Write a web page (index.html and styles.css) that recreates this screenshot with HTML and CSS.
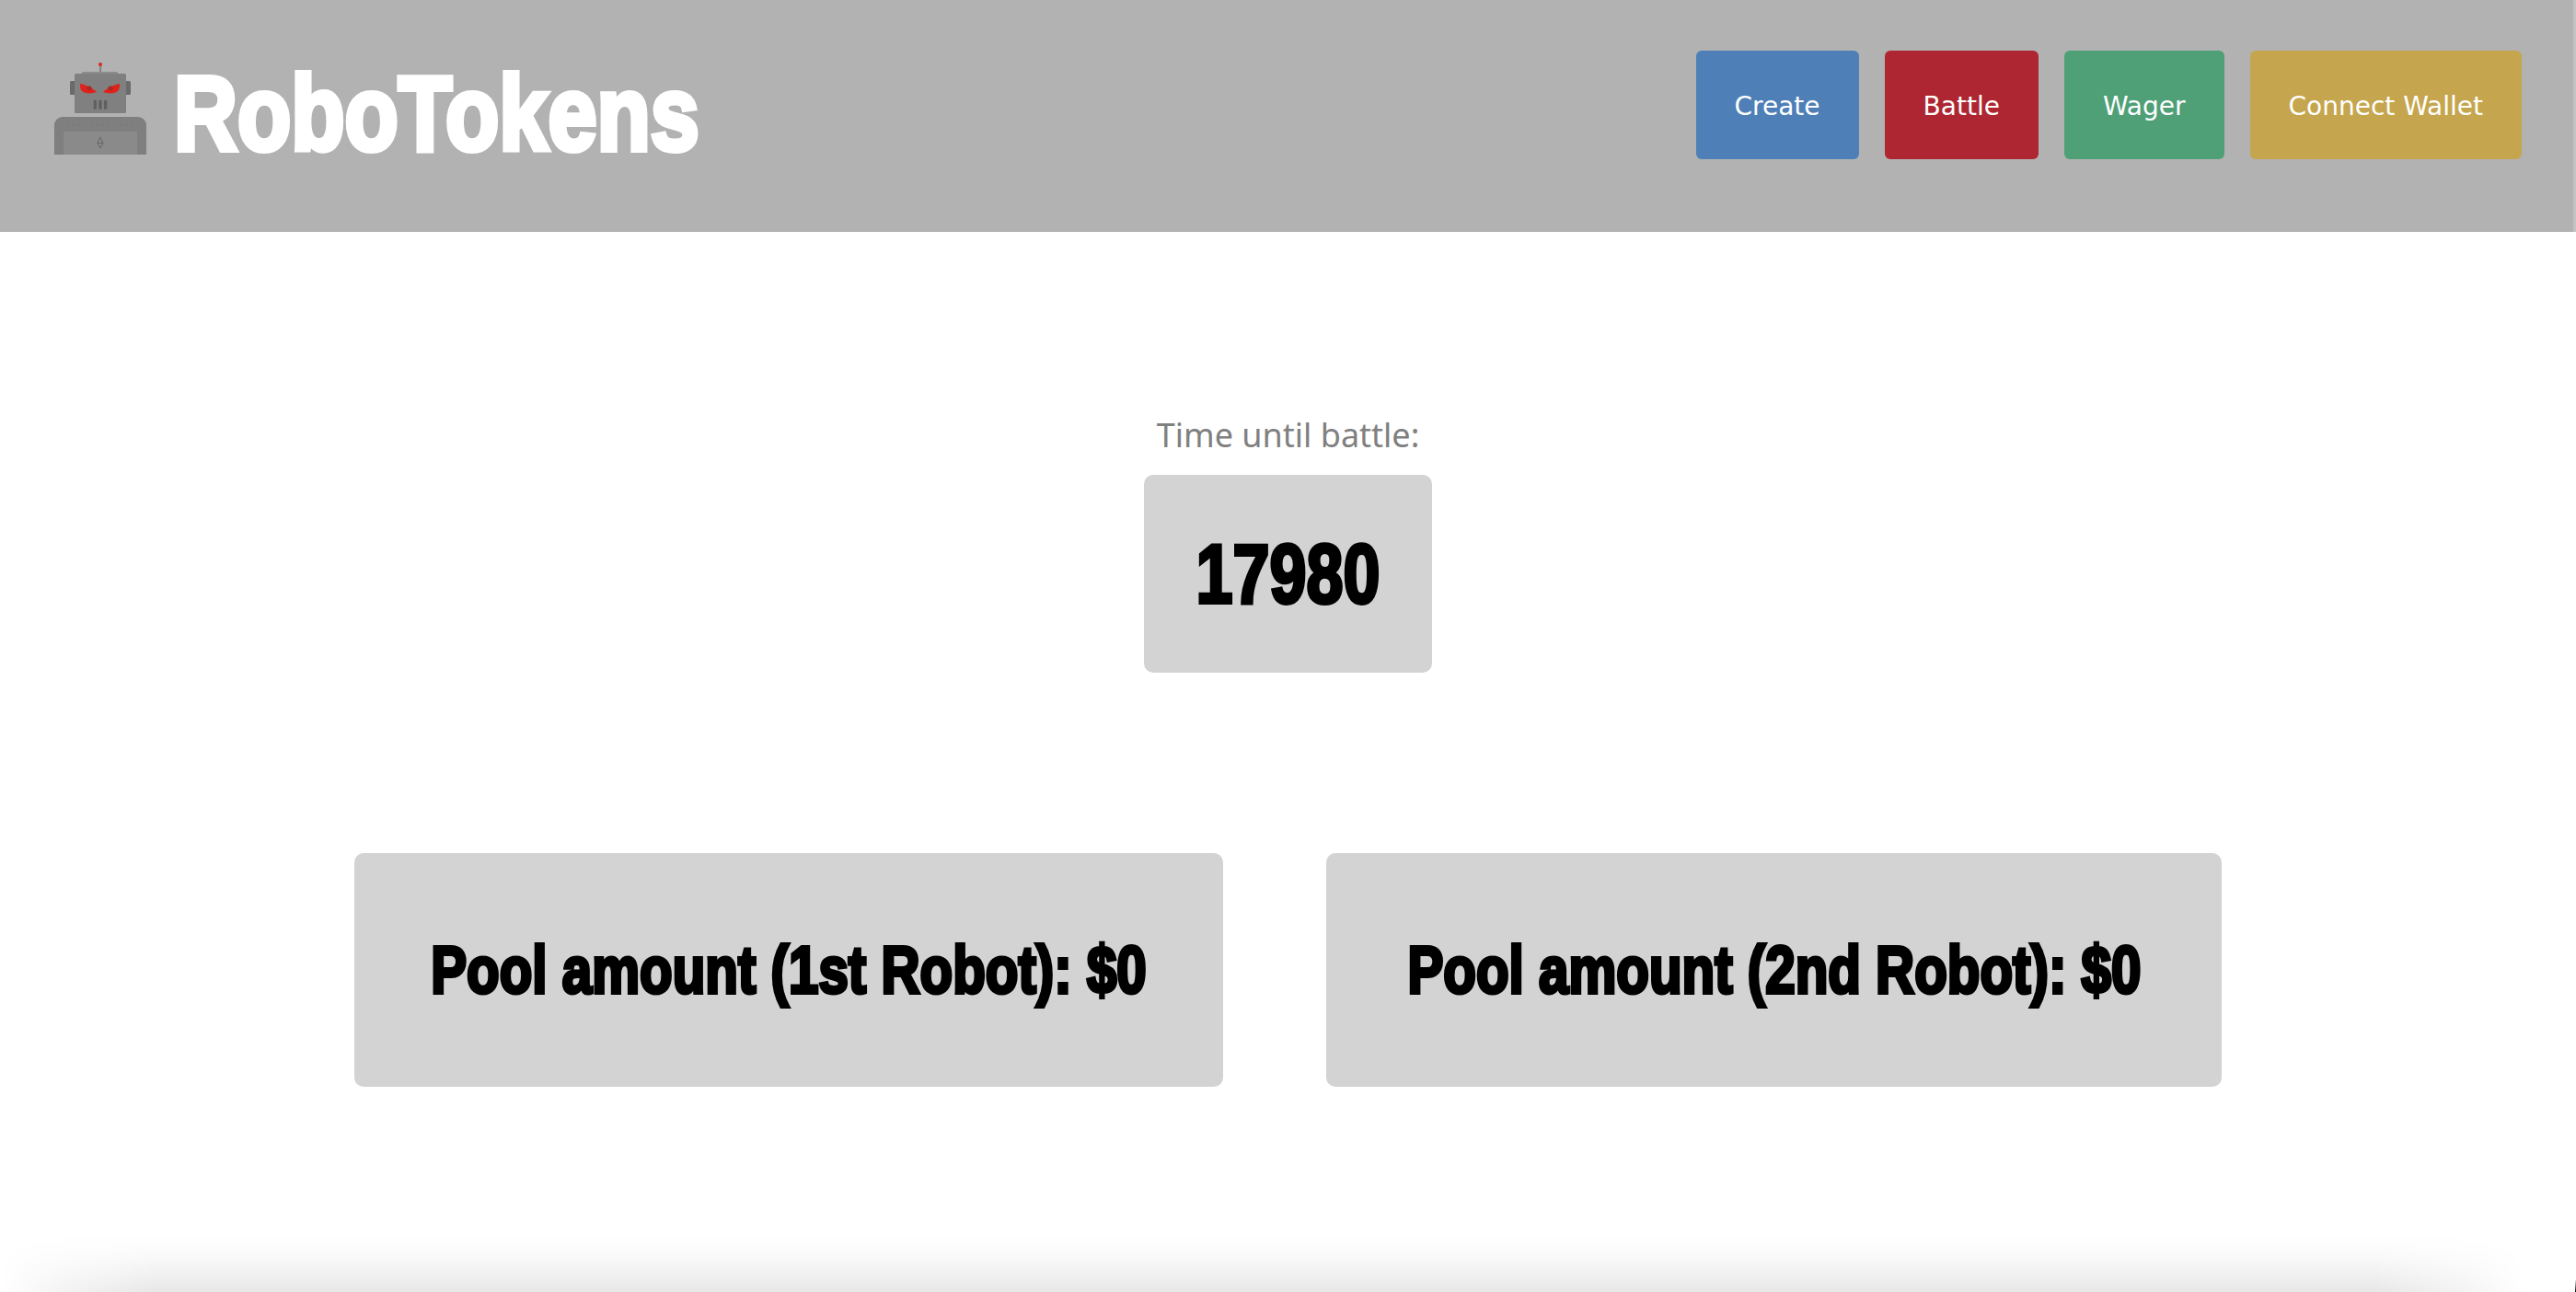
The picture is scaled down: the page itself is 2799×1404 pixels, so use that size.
FILE: index.html
```html
<!DOCTYPE html>
<html lang="en">
<head>
<meta charset="utf-8">
<title>RoboTokens</title>
<link rel="stylesheet" href="styles.css">
</head>
<body>
<header class="topbar">
  <div class="brand">
    <svg class="logo" viewBox="59 68 100 100" aria-hidden="true">
      <rect x="108.4" y="72" width="1.4" height="7" fill="#6f6f6f"/>
      <circle cx="109" cy="70" r="2" fill="#d8261f"/>
      <rect x="89" y="78" width="39" height="3" rx="1" fill="#8c8c8c"/>
      <rect x="76" y="88" width="6" height="15" rx="1.5" fill="#6a6a6a"/>
      <rect x="136" y="88" width="6" height="15" rx="1.5" fill="#6a6a6a"/>
      <rect x="81" y="80" width="56" height="43" rx="1.5" fill="#808080"/>
      <path d="M87 91 C93 92 100 95 105 100 C100 102 92 102 89 99 C87 97 87 94 87 91Z" fill="#e0221b"/>
      <path d="M130 91 C124 92 117 95 112 100 C117 102 125 102 128 99 C130 97 130 94 130 91Z" fill="#e0221b"/>
      <circle cx="97" cy="96" r="2.6" fill="#a82a24"/>
      <circle cx="120" cy="96" r="2.6" fill="#a82a24"/>
      <rect x="101.7" y="108.7" width="3.3" height="10" rx="1" fill="#5f5f5f"/>
      <rect x="107.3" y="108.7" width="3.3" height="10" rx="1" fill="#5f5f5f"/>
      <rect x="113" y="108.7" width="3.3" height="10" rx="1" fill="#5f5f5f"/>
      <path d="M59 168 V136 A9 9 0 0 1 68 127 H150 A9 9 0 0 1 159 136 V168Z" fill="#7f7f7f"/>
      <rect x="69" y="143" width="80" height="25" fill="#8a8a8a"/>
      <path d="M73 136 H145" stroke="#6c6c6c" stroke-width="1" stroke-dasharray="1 5.4"/>
      <path d="M109 149 L112 155.500 L109 161 L106 155.500Z M106 155.500 H112" fill="none" stroke="#666" stroke-width="1"/>
    </svg>
    <span class="wordmark">RoboTokens</span>
  </div>
  <nav class="actions">
    <button class="action action-create">Create</button>
    <button class="action action-battle">Battle</button>
    <button class="action action-wager">Wager</button>
    <button class="action action-wallet">Connect Wallet</button>
  </nav>
</header>
<main class="content">
  <p class="timer-label">Time until battle:</p>
  <div class="panel timer"><span class="timer-value">17980</span></div>
  <div class="pools">
    <div class="panel pool pool-first"><span class="pool-value">Pool amount (1st Robot): $0</span></div>
    <div class="panel pool pool-second"><span class="pool-value">Pool amount (2nd Robot): $0</span></div>
  </div>
</main>
<footer class="page-edge"></footer>
</body>
</html>
```
FILE: styles.css
```css
* { box-sizing: border-box; }
html, body { height: 100%; }
body {
  margin: 0;
  display: flex;
  flex-direction: column;
  overflow: hidden;
  background: #fff;
  position: relative;
}
.topbar {
  flex: none;
  height: 252px;
  background: #b2b2b2;
  border-right: 3px solid #c4c4c4;
  display: flex;
  justify-content: space-between;
  padding: 55px 56px 0 59px;
}
.brand {
  display: flex;
  align-items: flex-start;
  gap: 30px;
  padding-top: 13px;
}
.logo { flex: none; width: 100px; height: 100px; display: block; }
.wordmark {
  font: bold 115px/100px "Liberation Sans", sans-serif;
  color: #fff;
  -webkit-text-stroke: 6px #fff;
  margin-top: 5px;
  white-space: nowrap;
  display: inline-block;
  transform: scaleX(0.83);
  transform-origin: left center;
}
.actions { display: flex; gap: 28px; align-items: flex-start; }
.action {
  height: 118px;
  border: 0;
  border-radius: 6px;
  padding: 2px 42px 0;
  color: #fff;
  font: 28px "DejaVu Sans", sans-serif;
}
.action-create { background: #4e7fb7; }
.action-battle { background: #ae2631; }
.action-wager { background: #4f9f77; }
.action-wallet { background: #c5a64e; }
.content {
  flex: 1;
  display: flex;
  flex-direction: column;
  align-items: center;
}
.timer-label {
  margin: 196px 0 0;
  font: 36px/50px "Noto Sans", sans-serif;
  color: #808080;
}
.panel {
  background: #d3d3d3;
  border-radius: 10px;
  color: #000;
  font-family: "Liberation Sans", sans-serif;
  font-weight: bold;
  display: flex;
  align-items: center;
  justify-content: center;
  white-space: nowrap;
}
.timer {
  width: 313px;
  height: 215px;
  margin-top: 18px;
  font-size: 91px;
}
.timer-value {
  flex: none;
  display: inline-block;
  -webkit-text-stroke: 4px #000;
  transform: scaleX(0.79);
}
.pools {
  display: flex;
  gap: 112px;
  margin-top: 196px;
}
.pool {
  height: 254px;
  font-size: 72px;
}
.pool-value {
  flex: none;
  display: inline-block;
  -webkit-text-stroke: 4px #000;
  transform: scaleX(0.81);
}
.pool-first { width: 944px; }
.pool-second { width: 973px; }
.page-edge {
  flex: none;
  height: 62px;
  margin-top: -62px;
  background: linear-gradient(rgba(0, 0, 0, 0), rgba(0, 0, 0, 0.012) 25%, rgba(0, 0, 0, 0.035) 50%, rgba(0, 0, 0, 0.068) 78%, rgba(0, 0, 0, 0.095));
  -webkit-mask-image: linear-gradient(to right, transparent 0, rgba(0, 0, 0, 0.5) 70px, #000 170px, #000 calc(100% - 220px), rgba(0, 0, 0, 0.5) calc(100% - 125px), transparent calc(100% - 56px));
  mask-image: linear-gradient(to right, transparent 0, rgba(0, 0, 0, 0.5) 70px, #000 170px, #000 calc(100% - 220px), rgba(0, 0, 0, 0.5) calc(100% - 125px), transparent calc(100% - 56px));
}
body::after {
  content: "";
  position: absolute;
  right: 0;
  bottom: 0;
  width: 1px;
  height: 14px;
  background: linear-gradient(#fff, #000);
}
```
